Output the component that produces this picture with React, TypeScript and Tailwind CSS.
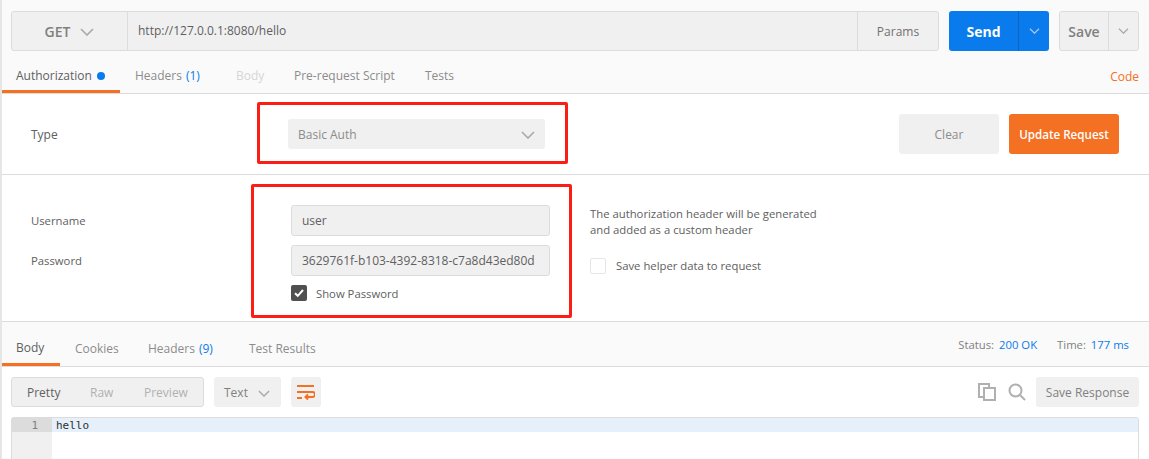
import React from 'react';

const Chevron: React.FC<{ className?: string }> = ({ className }) => (
  <svg className={className} viewBox="0 0 14 8" fill="none" stroke="currentColor" strokeWidth="1.6">
    <path d="M1 1l6 6 6-6" />
  </svg>
);

const requestTabs = [
  { name: 'Headers', count: '(1)', cls: 'ml-[15px] w-[101px] text-[#8c8c8c]' },
  { name: 'Body', cls: 'w-[58px] text-[#d6d6d6]' },
  { name: 'Pre-request Script', cls: 'w-[131px] text-[#8c8c8c]' },
  { name: 'Tests', cls: 'text-[#8c8c8c]' },
];

const responseTabs = [
  { name: 'Cookies', cls: 'w-[73px]' },
  { name: 'Headers', count: '(9)', cls: 'w-[101px]' },
  { name: 'Test Results', cls: '' },
];

const App: React.FC = () => {
  return (
    <div className="relative h-[459px] w-[1149px] overflow-hidden border-l-2 border-[#e6e6e6] bg-[#fafafa] font-['Open_Sans',sans-serif] text-xs text-[#606060]">
      {/* url bar */}
      <div className="flex pl-[9px] pr-[10px] pt-[11px]">
        <div className="flex h-[40px] w-[928px] rounded-[3px] border border-[#dcdcdc] bg-[#f0f0f0]">
          <div className="flex w-[116px] items-center justify-center gap-[10px] border-r border-[#dcdcdc] pt-[2px] text-sm font-semibold text-[#808080]">
            GET
            <Chevron className="h-[8px] w-[14px] text-[#a9a9a9]" />
          </div>
          <div className="flex flex-1 items-center pl-[10px] text-xs text-[#606060]">http://127.0.0.1:8080/hello</div>
          <div className="flex w-[81px] items-center justify-center border-l border-[#dcdcdc] pt-[2px] text-[#707070]">Params</div>
        </div>
        <div className="ml-[10px] flex h-[40px] w-[100px] rounded-[3px] bg-[#097bed] text-white">
          <div className="flex w-[70px] items-center justify-center border-r border-[#0a66c2] pt-[2px] text-sm font-bold">Send</div>
          <div className="flex flex-1 items-center justify-center">
            <Chevron className="h-[6px] w-[11px] text-[#a9c9ea]" />
          </div>
        </div>
        <div className="ml-[10px] flex h-[40px] w-[80px] rounded-[3px] border border-[#dcdcdc] bg-[#f0f0f0] text-[#808080]">
          <div className="flex w-[49px] items-center justify-center border-r border-[#dcdcdc] pt-[2px] text-sm font-semibold">Save</div>
          <div className="flex flex-1 items-center justify-center">
            <Chevron className="h-[6px] w-[11px] text-[#a9a9a9]" />
          </div>
        </div>
      </div>

      {/* request tabs */}
      <div className="flex h-[43px] items-stretch border-b border-[#dcdcdc] pr-[10px]">
        <div className="flex w-[118px] items-center gap-[5px] border-b-[3px] border-[#f47023] pl-[14px] pt-[11px] text-[#606060]">
          Authorization
          <span className="h-[8px] w-[8px] rounded-full bg-[#097bed]" />
        </div>
        {requestTabs.map((tab) => (
          <div key={tab.name} className={`flex items-center pt-[8px] ${tab.cls}`}>
            {tab.name}
            {tab.count && <span className="ml-1 text-[#097bed]">{tab.count}</span>}
          </div>
        ))}
        <div className="ml-auto flex items-center pt-[10px] text-[#f47023]">Code</div>
      </div>

      {/* auth type */}
      <div className="flex h-[81px] items-center border-b border-[#dcdcdc] bg-white pl-[29px]">
        <div className="w-[257px] pt-[2px] text-[#606060]">Type</div>
        <div className="flex h-[30px] w-[257px] items-center justify-between rounded-[3px] bg-[#f0f0f0] pl-[10px] pr-[10px] pt-[2px] text-[#8c8c8c]">
          Basic Auth
          <Chevron className="h-[8px] w-[14px] text-[#a9a9a9]" />
        </div>
        <div className="ml-[354px] flex h-[40px] w-[100px] items-center justify-center rounded-[3px] bg-[#f0f0f0] pt-[2px] text-[#8c8c8c]">Clear</div>
        <div className="ml-[10px] flex h-[40px] w-[110px] items-center justify-center rounded-[3px] bg-[#f47023] pt-[2px] text-[11.6px] font-semibold text-white">Update Request</div>
      </div>

      {/* credentials */}
      <div className="flex h-[147px] border-b border-[#dcdcdc] bg-white pl-[29px] pt-[30px] text-[11.3px]">
        <div className="flex w-[260px] flex-col gap-[22px] pt-[7px]">
          <div className="h-[18px] leading-[18px]">Username</div>
          <div className="h-[18px] leading-[18px]">Password</div>
        </div>
        <div className="flex w-[259px] flex-col">
          <div className="flex h-[31px] items-center rounded-[3px] border border-[#dcdcdc] bg-[#f0f0f0] pl-[10px] text-xs">user</div>
          <div className="mt-[9px] flex h-[31px] items-center rounded-[3px] border border-[#dcdcdc] bg-[#f0f0f0] pl-[10px] text-xs">3629761f-b103-4392-8318-c7a8d43ed80d</div>
          <div className="mt-[9px] flex items-center gap-[9px]">
            <span className="flex h-[16px] w-[16px] items-center justify-center rounded-[2px] bg-[#505050]">
              <svg className="h-[10px] w-[10px]" viewBox="0 0 10 10" fill="none" stroke="white" strokeWidth="2">
                <path d="M1 5.2l2.8 2.6L9 2" />
              </svg>
            </span>
            <span className="pt-[1px]">Show Password</span>
          </div>
        </div>
        <div className="ml-[40px] flex flex-col pt-[1px] leading-[16px]">
          <div>The authorization header will be generated</div>
          <div>and added as a custom header</div>
          <div className="mt-[20px] flex items-center gap-[10px]">
            <span className="h-[16px] w-[16px] rounded-[2px] border border-[#e6e6e6] bg-white" />
            Save helper data to request
          </div>
        </div>
      </div>

      {/* response tabs */}
      <div className="flex h-[45px] items-stretch border-b border-[#dcdcdc] pr-[20px]">
        <div className="flex w-[58px] items-center border-b-[3px] border-[#f47023] pl-[14px] pt-[11px] text-[#606060]">Body</div>
        <div className="ml-[15px] flex items-center pt-[10px] text-[#8c8c8c]">
          {responseTabs.map((tab) => (
            <div key={tab.name} className={tab.cls}>
              {tab.name}
              {tab.count && <span className="ml-1 text-[#097bed]">{tab.count}</span>}
            </div>
          ))}
        </div>
        <div className="ml-auto flex items-start gap-[20px] pt-[15px] text-[11.3px] text-[#808080]">
          <div>Status: <span className="ml-[2px] text-[#097bed]">200 OK</span></div>
          <div>Time: <span className="ml-[2px] text-[#097bed]">177 ms</span></div>
        </div>
      </div>

      {/* response body */}
      <div className="h-[92px] bg-white pl-[9px] pr-[10px] pt-[10px]">
        <div className="flex h-[30px] items-center">
          <div className="flex h-[30px] w-[193px] items-center rounded-[3px] border border-[#dcdcdc] bg-[#f0f0f0] pl-[15px] pt-[2px] text-[#b0b0b0]">
            <span className="w-[63px] text-[#606060]">Pretty</span>
            <span className="w-[54px]">Raw</span>
            <span>Preview</span>
          </div>
          <div className="ml-[10px] flex h-[30px] w-[67px] items-center gap-[10px] rounded-[3px] bg-[#f0f0f0] pl-[10px] pt-[2px] text-[#808080]">
            Text
            <Chevron className="h-[7px] w-[12px] text-[#a9a9a9]" />
          </div>
          <div className="ml-[10px] flex h-[30px] w-[30px] items-center justify-center rounded-[3px] bg-[#f0f0f0]">
            <svg className="h-[16px] w-[18px]" viewBox="0 0 18 16" fill="none" stroke="#f47023" strokeWidth="2">
              <path d="M0 2h17M0 8h15.5a2.5 2.5 0 0 1 0 5H9M0 14h5M11 10.5l-2.5 2.5 2.5 2.5" />
            </svg>
          </div>
          <svg className="ml-auto h-[18px] w-[18px]" viewBox="0 0 18 18" fill="none" stroke="#b0b0b0" strokeWidth="2">
            <path d="M5 14H1V1h10v4M6 5h11v12H6z" />
          </svg>
          <svg className="ml-[12px] h-[18px] w-[18px]" viewBox="0 0 18 18" fill="none" stroke="#b0b0b0" strokeWidth="2">
            <circle cx="7.5" cy="7.5" r="6" />
            <path d="M12 12l5 5" />
          </svg>
          <div className="ml-[10px] flex h-[30px] w-[103px] items-center justify-center rounded-[3px] bg-[#f0f0f0] pt-[2px] text-[#808080]">Save Response</div>
        </div>
        <div className="mt-[10px] h-[52px] rounded-t-[3px] border border-b-0 border-[#dcdcdc]">
          <div className="flex h-[14px] bg-[#e5f0fb]">
            <div className="w-[40px] bg-[#dcdcdc] pr-[14px] pt-[1px] text-right font-['DejaVu_Sans_Mono',monospace] text-[11px] leading-[14px] text-[#808080]">1</div>
            <div className="pl-[4px] pt-[1px] font-['DejaVu_Sans_Mono',monospace] text-[11px] leading-[14px] text-[#303030]">hello</div>
          </div>
          <div className="h-[38px] w-[40px] bg-[#f0f0f0]" />
        </div>
      </div>

      {/* red annotation boxes */}
      <div className="absolute left-[255px] top-[102px] h-[62px] w-[311px] rounded-[2px] border-[3px] border-[#fa1e14]" />
      <div className="absolute left-[249px] top-[184px] h-[134px] w-[321px] rounded-[2px] border-[3px] border-[#fa1e14]" />
    </div>
  );
};

export default App;
